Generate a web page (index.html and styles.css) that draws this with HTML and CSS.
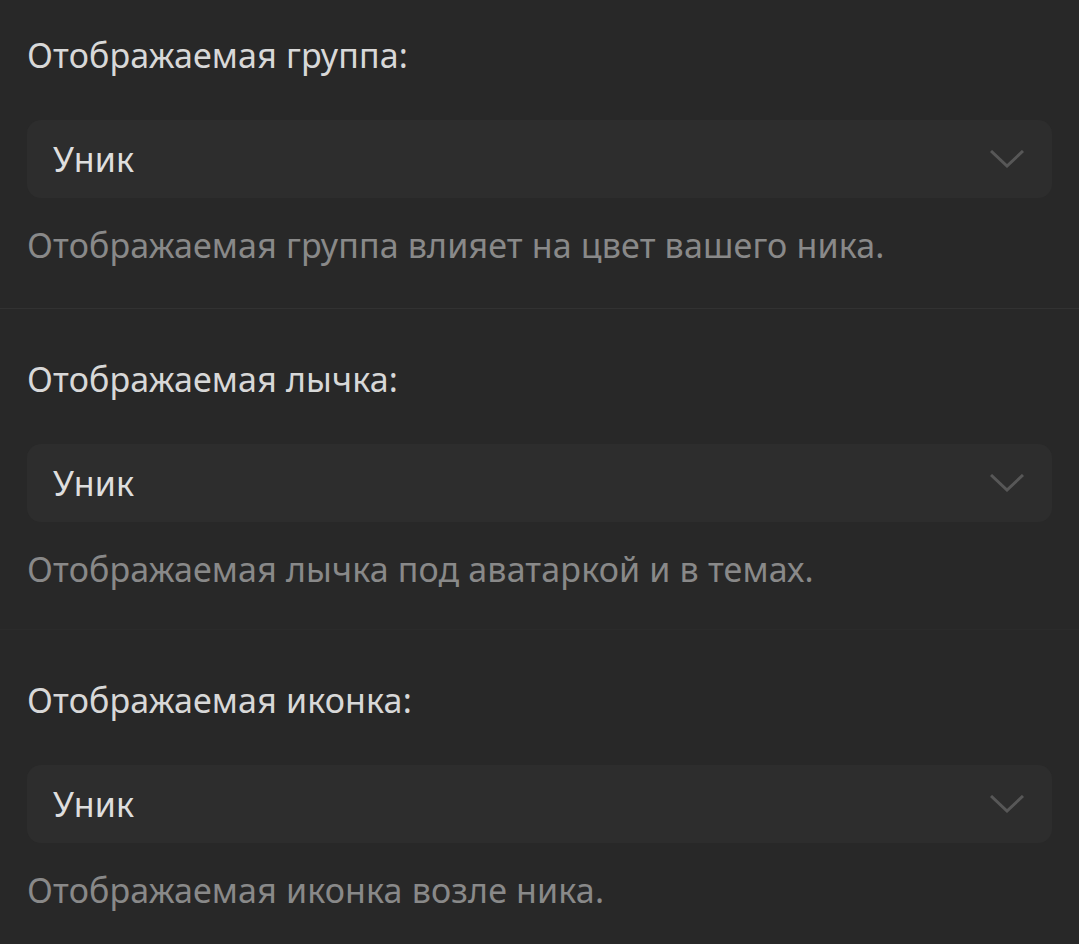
FILE: index.html
```html
<!DOCTYPE html>
<html>
<head>
<meta charset="utf-8">
<link rel="stylesheet" href="styles.css">
</head>
<body>
<div class="settings">
	<div class="field first">
		<div class="label">Отображаемая группа:</div>
		<div class="select">
			<span>Уник</span>
			<svg class="chevron" viewBox="0 0 34 18"><path d="M1 1 L17 16 L33 1"/></svg>
		</div>
		<div class="hint">Отображаемая группа влияет на цвет вашего ника.</div>
	</div>
	<div class="field">
		<div class="label">Отображаемая лычка:</div>
		<div class="select">
			<span>Уник</span>
			<svg class="chevron" viewBox="0 0 34 18"><path d="M1 1 L17 16 L33 1"/></svg>
		</div>
		<div class="hint">Отображаемая лычка под аватаркой и в темах.</div>
	</div>
	<div class="field last">
		<div class="label">Отображаемая иконка:</div>
		<div class="select">
			<span>Уник</span>
			<svg class="chevron" viewBox="0 0 34 18"><path d="M1 1 L17 16 L33 1"/></svg>
		</div>
		<div class="hint">Отображаемая иконка возле ника.</div>
	</div>
</div>
</body>
</html>
```

FILE: styles.css
```css
body {
	margin: 0;
	background: #282828;
	font-family: "Noto Sans", "Open Sans", sans-serif;
	letter-spacing: 0.15px;
}

.field {
	padding: 50px 27px 40px;
	border-bottom: 1px solid #2b2b2b;
}
.field.first {
	padding-top: 35px;
	padding-bottom: 43px;
	border-bottom-color: #323232;
}
.field.last {
	border-bottom: none;
}

.label {
	font-size: 34px;
	line-height: 40px;
	color: #d8d8d8;
}

.select {
	margin-top: 45px;
	height: 78px;
	background: #2d2d2d;
	border-radius: 14px;
	display: flex;
	align-items: center;
	justify-content: space-between;
	padding: 0 28px 0 26px;
	font-size: 34px;
	color: #dedede;
}

.chevron {
	width: 34px;
	height: 18px;
}
.chevron path {
	fill: none;
	stroke: #575757;
	stroke-width: 3;
}

.hint {
	margin-top: 27px;
	font-size: 34px;
	line-height: 40px;
	color: #898989;
}
```
